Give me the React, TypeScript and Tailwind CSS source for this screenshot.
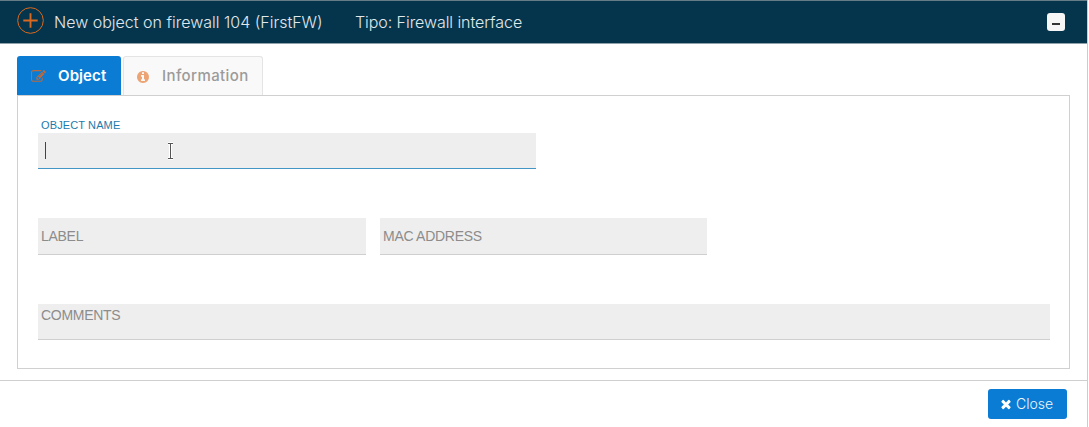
import React from "react";

function AddIcon() {
  return (
    <svg className="h-7 w-7 shrink-0" viewBox="0 0 28 28" fill="none" stroke="#d9691f">
      <circle cx="13.5" cy="13.5" r="12.8" strokeWidth="1" />
      <path d="M13.5 6.3v14.4M6.3 13.5h14.4" strokeWidth="1.9" />
    </svg>
  );
}

function Glyph({ d, className }: { d: string; className: string }) {
  return (
    <svg className={className} viewBox="0 0 1792 1792" fill="currentColor">
      <path d={d} />
    </svg>
  );
}

const EDIT =
  "M888 1184l116-116-152-152-116 116v56h96v96h56zm440-720q-16-16-33 1l-350 350q-17 17-1 33t33-1l350-350q17-17 1-33zm80 594v190q0 119-84.5 203.5t-203.5 84.5h-832q-119 0-203.5-84.5t-84.5-203.5v-832q0-119 84.5-203.5t203.5-84.5h832q63 0 117 25 15 7 18 23 3 17-9 29l-49 49q-14 14-32 8-23-6-45-6h-832q-66 0-113 47t-47 113v832q0 66 47 113t113 47h832q66 0 113-47t47-113v-126q0-13 9-22l64-64q15-15 35-7t20 29zm-96-738l288 288-672 672h-288v-288zm444 132l-92 92-288-288 92-92q28-28 68-28t68 28l152 152q28 28 28 68t-28 68z";
const INFO =
  "M1152 1376v-160q0-14-9-23t-23-9h-96v-512q0-14-9-23t-23-9h-320q-14 0-23 9t-9 23v160q0 14 9 23t23 9h96v320h-96q-14 0-23 9t-9 23v160q0 14 9 23t23 9h448q14 0 23-9t9-23zm-128-896v-160q0-14-9-23t-23-9h-192q-14 0-23 9t-9 23v160q0 14 9 23t23 9h192q14 0 23-9t9-23zm640 416q0 209-103 385.5t-279.5 279.5-385.5 103-385.5-103-279.5-279.5-103-385.5 103-385.5 279.5-279.5 385.5-103 385.5 103 279.5 279.5 103 385.5z";
const TIMES =
  "M1490 1322q0 40-28 68l-136 136q-28 28-68 28t-68-28l-294-294-294 294q-28 28-68 28t-68-28l-136-136q-28-28-28-68t28-68l294-294-294-294q-28-28-28-68t28-68l136-136q28-28 68-28t68 28l294 294 294-294q28-28 68-28t68 28l136 136q28 28 28 68t-28 68l-294 294 294 294q28 28 28 68z";

function Field({ label, className }: { label: string; className: string }) {
  return (
    <div
      className={`flex border-b border-[#cfcfcf] bg-[#eeeeee] pl-[3px] text-sm leading-5 tracking-[-0.02em] text-[#8c8c8c] ${className}`}
    >
      {label}
    </div>
  );
}

export default function App() {
  return (
    <div className="flex h-[427px] w-[1088px] flex-col border-r border-[#cccccc] bg-white font-['Liberation_Sans',sans-serif]">
      <header className="flex h-11 shrink-0 items-center border-t border-b border-t-[#667c86] border-b-[#8fa1aa] bg-[#05354c] pr-[22px] pl-[17px] font-['Inter',sans-serif] text-base font-light text-[#e0e8ec]">
        <div className="-mt-[3px]">
          <AddIcon />
        </div>
        <span className="ml-[9px] w-[301px] whitespace-nowrap tracking-[0px]">New object on firewall 104 (FirstFW)</span>
        <span className="whitespace-nowrap tracking-[-0.07px]">Tipo: Firewall interface</span>
        <button className="ml-auto flex h-[18px] w-[18px] items-center justify-center rounded-[3px] bg-[#f6f6f6]">
          <span className="mt-[3px] h-[2px] w-2 bg-[#333333]" />
        </button>
      </header>

      <main className="flex h-[336px] shrink-0 flex-col px-[17px] pt-3">
        <div className="flex h-[39px] shrink-0 gap-[2px] font-['Inter',sans-serif] text-[15px] font-medium">
          <div className="flex w-[104px] items-center rounded-t-[3px] bg-[#0a7cd4] pt-[2px] pl-3.5 text-white">
            <Glyph d={EDIT} className="h-[15px] w-[15px] text-[#b86a40]" />
            <span className="ml-[12px] font-semibold tracking-[0.1px]">Object</span>
          </div>
          <div className="flex w-[140px] items-center rounded-t-[3px] border border-b-0 border-[#e4e4e4] bg-[#f9f9f9] pt-px pl-[12px] text-[#9b9b9b]">
            <Glyph d={INFO} className="h-[14px] w-[14px] text-[#eca474]" />
            <span className="ml-[12px] tracking-[0.4px]">Information</span>
          </div>
        </div>

        <section className="flex h-[274px] w-[1053px] shrink-0 flex-col border border-[#d0d0d0] pt-[21px] pr-[19px] pl-[20px]">
          <label className="h-4 pl-[3px] text-[11px] leading-4 tracking-[0.12px] whitespace-nowrap text-[#1c7aad]">
            OBJECT NAME
          </label>
          <div className="flex h-9 w-[498px] items-center border-b border-[#4295c4] bg-[#eeeeee] pl-[7px]">
            <span className="h-[17px] w-px bg-[#444444]" />
            <svg className="ml-[120px] h-[18px] w-[9px]" viewBox="0 0 9 18" fill="none">
              <path d="M2 1.5h5M2 16.5h5M4.5 2v14" stroke="white" strokeWidth="3" />
              <path d="M2 1.5h5M2 16.5h5M4.5 2v14" stroke="#555555" />
            </svg>
          </div>
          <div className="mt-[49px] flex gap-[14px]">
            <Field label="LABEL" className="h-[37px] w-[328px] items-center" />
            <Field label="MAC ADDRESS" className="h-[37px] w-[327px] items-center" />
          </div>
          <Field label="COMMENTS" className="mt-[49px] h-9 w-[1012px] items-start pt-px" />
        </section>
      </main>

      <footer className="flex h-[47px] shrink-0 items-start justify-end border-t border-[#cfcfcf] pt-2 pr-5">
        <button className="flex h-[30px] w-[79px] items-center rounded-[3px] bg-[#0a7cd4] pl-[11px] font-['Inter',sans-serif] text-sm font-light text-[#eef6fc]">
          <Glyph d={TIMES} className="h-[14px] w-[14px] text-white" />
          <span className="ml-[3px]">Close</span>
        </button>
      </footer>
    </div>
  );
}
